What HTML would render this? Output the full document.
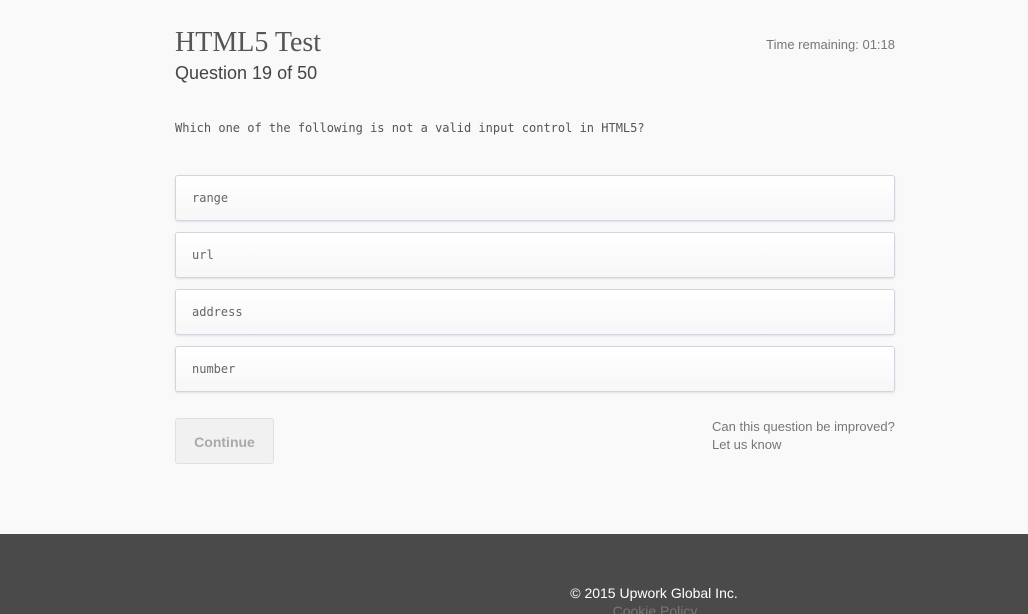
<!DOCTYPE html>
<html><head><style>
html,body{margin:0;width:1028px;height:614px;overflow:hidden}
body{background:#f9f9f9;font-family:"Liberation Sans",sans-serif;position:relative}
.a{position:absolute}
h1{position:absolute;left:175px;top:27px;margin:0;font:400 28px "Liberation Serif",serif;color:#555}
.opt{position:absolute;left:175px;width:718px;height:44px;border:1px solid #d4d4de;border-radius:3px;background:linear-gradient(#fff,#f7f7f7);box-shadow:0 1px 2px rgba(0,0,0,.1)}
.opt span{position:absolute;left:16px;top:15px;font:12px "DejaVu Sans Mono",monospace;color:#666}
</style></head><body>
<h1>HTML5 Test</h1>
<div class="a" style="left:175px;top:63px;font-size:18px;color:#444">Question 19 of 50</div>
<div class="a" style="right:133px;top:37px;font-size:13px;color:#777">Time remaining: 01:18</div>
<div class="a" style="left:175px;top:121px;font:12px 'DejaVu Sans Mono',monospace;color:#555">Which one of the following is not a valid input control in HTML5?</div>
<div class="opt" style="top:175px"><span>range</span></div>
<div class="opt" style="top:232px"><span>url</span></div>
<div class="opt" style="top:289px"><span>address</span></div>
<div class="opt" style="top:346px"><span>number</span></div>
<div class="a" style="left:175px;top:418px;width:97px;height:44px;border:1px solid #e0e0e0;border-radius:3px;background:#f1f1f1;color:#aaa;font-weight:bold;font-size:14px;line-height:46px;text-align:center">Continue</div>
<div class="a" style="left:712px;top:418px;font-size:13px;color:#777;line-height:18px">Can this question be improved?<br>Let us know</div>
<div class="a" style="left:0;top:534px;width:1028px;height:80px;background:#4a4a4a"></div>
<div class="a" style="left:0;width:1308px;top:585px;text-align:center;font-size:14px;color:#fff">© 2015 Upwork Global Inc.</div>
<div class="a" style="left:0;width:1310px;top:603px;text-align:center;font-size:14px;color:#777">Cookie Policy</div>
</body></html>
